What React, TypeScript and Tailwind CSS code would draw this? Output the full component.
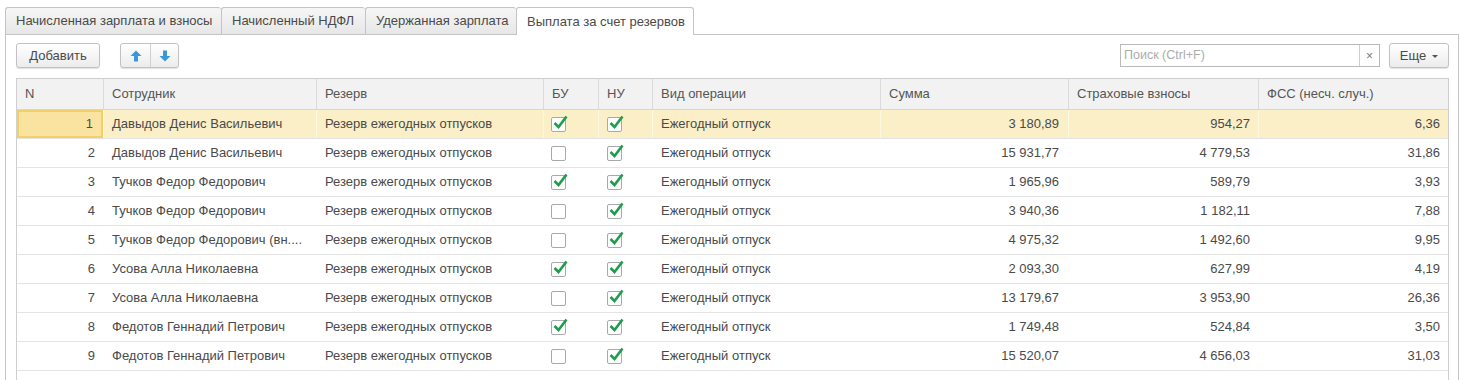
import React from 'react';

// Row data for the "Выплата за счет резервов" tab
type Row = {
  n: number;
  employee: string;
  bu: boolean;
  nu: boolean;
  sum: string;
  insurance: string;
  fss: string;
};

const rows: Row[] = [
  { n: 1, employee: 'Давыдов Денис Васильевич', bu: true, nu: true, sum: '3 180,89', insurance: '954,27', fss: '6,36' },
  { n: 2, employee: 'Давыдов Денис Васильевич', bu: false, nu: true, sum: '15 931,77', insurance: '4 779,53', fss: '31,86' },
  { n: 3, employee: 'Тучков Федор Федорович', bu: true, nu: true, sum: '1 965,96', insurance: '589,79', fss: '3,93' },
  { n: 4, employee: 'Тучков Федор Федорович', bu: false, nu: true, sum: '3 940,36', insurance: '1 182,11', fss: '7,88' },
  { n: 5, employee: 'Тучков Федор Федорович (вн....', bu: false, nu: true, sum: '4 975,32', insurance: '1 492,60', fss: '9,95' },
  { n: 6, employee: 'Усова Алла Николаевна', bu: true, nu: true, sum: '2 093,30', insurance: '627,99', fss: '4,19' },
  { n: 7, employee: 'Усова Алла Николаевна', bu: false, nu: true, sum: '13 179,67', insurance: '3 953,90', fss: '26,36' },
  { n: 8, employee: 'Федотов Геннадий Петрович', bu: true, nu: true, sum: '1 749,48', insurance: '524,84', fss: '3,50' },
  { n: 9, employee: 'Федотов Геннадий Петрович', bu: false, nu: true, sum: '15 520,07', insurance: '4 656,03', fss: '31,03' },
];

const tabs = [
  { label: 'Начисленная зарплата и взносы', w: 'w-[216px]' },
  { label: 'Начисленный НДФЛ', w: 'w-[144px]' },
  { label: 'Удержанная зарплата', w: 'w-[151px]' },
];

const cols = 'grid grid-cols-[86px_213px_227px_55px_54px_228px_188px_190px_1fr]';

const Check = ({ on }: { on: boolean }) => (
  <span className="relative inline-block h-[15px] w-[15px] rounded-[2px] border border-[#a9a9a9] bg-white">
    {on && (
      <svg className="absolute left-[0px] top-[-3px]" width="17" height="17" viewBox="0 0 17 17">
        <path d="M2.5 8 L6.5 12 L14.5 1.5" fill="none" stroke="#1f9d4c" strokeWidth="2.6" strokeLinejoin="miter" />
      </svg>
    )}
  </span>
);

const Arrow = ({ down }: { down?: boolean }) => (
  <svg width="12" height="12" viewBox="0 0 12 12" className={down ? 'rotate-180' : ''}>
    <path d="M6 0.5 L11.5 6 H8 V11.5 H4 V6 H0.5 Z" fill="#3b97d8" />
  </svg>
);

const btn =
  'flex items-center justify-center h-[25px] rounded-[3px] border border-[#c2c2c2] bg-gradient-to-b from-white to-[#ececec] shadow-[0_1px_1px_rgba(0,0,0,0.12)]';

export default function App() {
  return (
    <div
      className="h-[380px] overflow-hidden bg-white pl-[5px] pr-[1px] pt-[7px] text-[13px] text-[#4a4a4a]"
      style={{ fontFamily: '"Liberation Sans", Arial, sans-serif' }}
    >
      {/* Tabs */}
      <div className="flex h-[28px] items-stretch">
        {tabs.map((t) => (
          <div
            key={t.label}
            className={`${t.w} flex items-center rounded-t-[3px] border-l border-t border-b border-[#c4c4c4] bg-gradient-to-b from-[#f6f6f6] to-[#e7e7e7] pl-[10px]`}
          >
            {t.label}
          </div>
        ))}
        <div className="flex w-[178px] items-center rounded-t-[3px] border-x border-t border-[#c4c4c4] bg-white pl-[10px]">
          Выплата за счет резервов
        </div>
        <div className="flex-1 border-b border-[#c4c4c4]" />
      </div>

      {/* Panel */}
      <div className="h-[400px] border-x border-[#c4c4c4] pl-[10px] pr-[9px] pt-[8px]">
        {/* Toolbar */}
        <div className="flex items-center">
          <button className={`${btn} w-[84px] text-[#4a4a4a]`}>Добавить</button>
          <div className={`${btn} ml-[20px] w-[59px] !justify-start`}>
            <span className="flex h-full w-[30px] items-center justify-center border-r border-[#cfcfcf]">
              <Arrow />
            </span>
            <span className="flex h-full flex-1 items-center justify-center">
              <Arrow down />
            </span>
          </div>
          <div className="flex-1" />
          <div className="flex h-[23px] w-[260px] items-stretch border border-[#b9b9b9] bg-white">
            <span className="flex flex-1 items-center pl-[3px] text-[12.5px] text-[#acacac]">Поиск (Ctrl+F)</span>
            <span className="flex w-[20px] items-center justify-center border-l border-[#cfcfcf] text-[12px] text-[#7a7a7a]">
              ×
            </span>
          </div>
          <button className={`${btn} ml-[9px] w-[60px] gap-[6px] text-[#4a4a4a]`}>
            Еще
            <span className="mt-[2px] inline-block h-0 w-0 border-x-[3px] border-t-[3px] border-x-transparent border-t-[#555]" />
          </button>
        </div>

        {/* Table */}
        <div className="mt-[10px] border border-[#cfcfcf]">
          <div className={`${cols} h-[31px] border-b border-[#d6d6d6] bg-[#f2f2f2] text-[#555]`}>
            {['N', 'Сотрудник', 'Резерв', 'БУ', 'НУ', 'Вид операции', 'Сумма', 'Страховые взносы', 'ФСС (несч. случ.)'].map(
              (h, i) => (
                <div
                  key={h}
                  className={`flex items-center pl-[8px] ${i > 0 ? 'border-l border-[#dadada]' : ''}`}
                >
                  {h}
                </div>
              ),
            )}
          </div>
          {rows.map((r) => {
            const sel = r.n === 1;
            const sep = sel ? 'border-l border-[#fdf6e1]' : 'border-l border-transparent';
            return (
              <div
                key={r.n}
                className={`${cols} h-[29px] border-b border-[#e4e4e4] ${sel ? 'bg-[#fbefc7]' : 'bg-white'}`}
              >
                <div
                  className={`flex items-center justify-end pr-[8px] ${
                    sel ? 'border-2 border-[#f1d068] bg-[#fae3a0] pr-[6px]' : ''
                  }`}
                >
                  {r.n}
                </div>
                <div className={`${sep} flex items-center whitespace-nowrap pl-[8px]`}>{r.employee}</div>
                <div className={`${sep} flex items-center pl-[8px]`}>Резерв ежегодных отпусков</div>
                <div className={`${sep} flex items-center pl-[7px]`}>
                  <Check on={r.bu} />
                </div>
                <div className={`${sep} flex items-center pl-[8px]`}>
                  <Check on={r.nu} />
                </div>
                <div className={`${sep} flex items-center pl-[8px]`}>Ежегодный отпуск</div>
                <div className={`${sep} flex items-center justify-end pr-[9px]`}>{r.sum}</div>
                <div className={`${sep} flex items-center justify-end pr-[8px]`}>{r.insurance}</div>
                <div className={`${sep} flex items-center justify-end pr-[8px]`}>{r.fss}</div>
              </div>
            );
          })}
          <div className="h-[40px]" />
        </div>
      </div>
    </div>
  );
}
